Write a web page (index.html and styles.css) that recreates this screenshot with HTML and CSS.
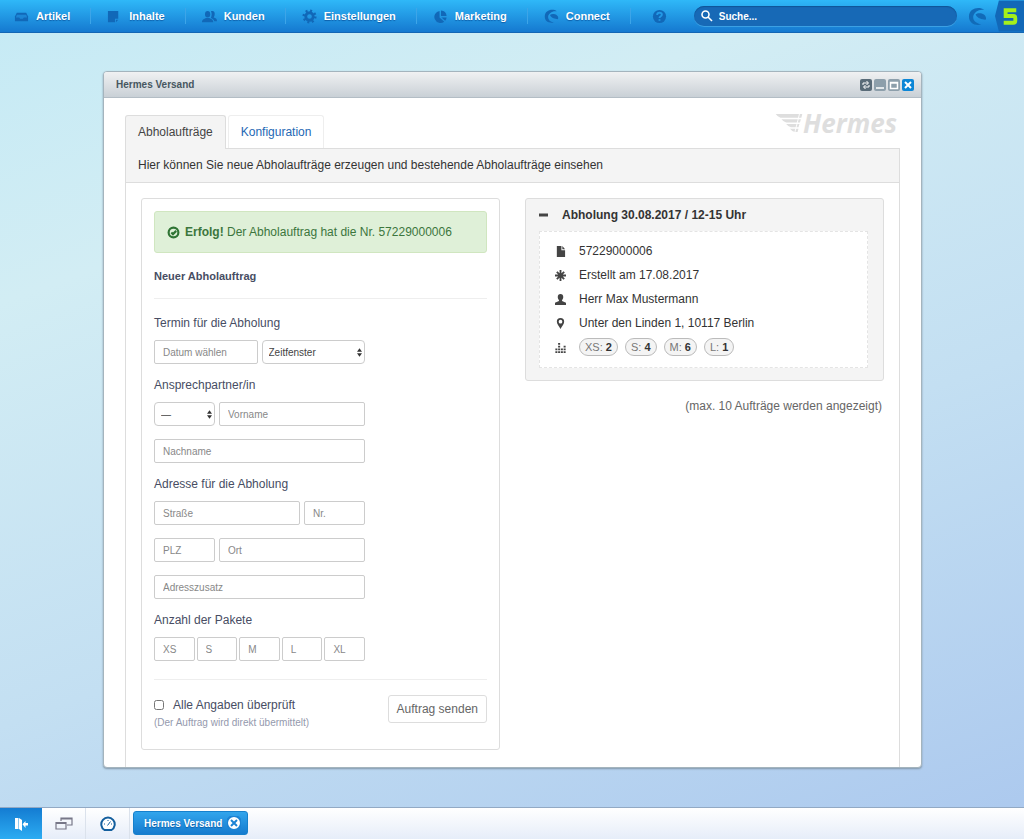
FILE: index.html
```html
<!DOCTYPE html>
<html lang="de">
<head>
<meta charset="utf-8">
<meta name="viewport" content="width=device-width, initial-scale=1">
<title>Hermes Versand</title>
<link rel="stylesheet" href="styles.css">
</head>
<body>
<header class="topbar">
  <nav class="menu">
    <a class="menu-item" href="#"><svg class="menu-icon" viewBox="0 0 16 16"><path d="M3 4h10l2 4v5H1V8z"/><path class="cut" d="M3 6h10l1 3h-3.500l-1 1.500h-3L5.500 9H2z"/></svg>Artikel</a>
    <a class="menu-item" href="#"><svg class="menu-icon" viewBox="0 0 16 16"><path d="M1 2h11v8.500H8.500V14H1zM9.500 11.500H12L9.500 14z"/></svg>Inhalte</a>
    <a class="menu-item" href="#"><svg class="menu-icon" viewBox="0 0 16 16"><ellipse cx="6" cy="5.500" rx="2.800" ry="3.500"/><path d="M0 14c0-3 2-3.500 4.500-4.500h3C10 10.500 12 11 12 14z"/><path d="M9.500 2.500c3-1 4.500 1 4 3.500-.2 1.500-.8 2-1 3 2 .8 3.500 1 3.500 4h-3c-.3-2-2-2.800-3.500-3.500 1-2 1.200-5 0-7z"/></svg>Kunden</a>
    <a class="menu-item" href="#"><svg class="menu-icon" viewBox="0 0 16 16"><circle class="line" cx="8" cy="8" r="4"/><circle class="teeth" cx="8" cy="8" r="6"/></svg>Einstellungen</a>
    <a class="menu-item" href="#"><svg class="menu-icon" viewBox="0 0 16 16"><path d="M7 2v7l5 4.500A6.500 6.500 0 1 1 7 2zM8.500 1.500A6.500 6.500 0 0 1 14.500 7.500h-6zM9 9h5.500a6 6 0 0 1-1.500 3.500z"/></svg>Marketing</a>
    <a class="menu-item" href="#"><svg class="menu-icon" viewBox="0 0 20 20"><path d="M17 3C12-1 1 1 1 10c0 7 6 9 12 8C8 17 5 14 5.500 10S11 2 17 3zM8 8c3-3 11-1 11 4 0 1-.5 1.500-1 1.500-3-.5-8-1-10-5.500z"/></svg>Connect</a>
    <a class="menu-item help" href="#" aria-label="Hilfe"><svg class="menu-icon" viewBox="0 0 16 16"><circle cx="8" cy="8" r="7"/><path class="question" d="M5.500 6.500C5.500 3 10.500 3.500 10.500 6c0 1.700-2.500 1.800-2.500 3.500M8 10.800v1.700"/></svg></a>
  </nav>
  <label class="search">
    <svg class="search-icon" viewBox="0 0 12 12"><circle cx="4.500" cy="4.500" r="3.500"/><path d="M7 7l4 4"/></svg>
    <input type="text" placeholder="Suche..." aria-label="Suche">
  </label>
  <svg class="swirl" viewBox="0 0 20 20"><path d="M17 3C12-1 1 1 1 10c0 7 6 10 13 8.500C8 17 5 14 5.500 10S11 2 17 3zM8 8c3-3 11-1 11 4 0 1-.5 1.500-1 1.500-3-.5-8-1-10-5.500z"/></svg>
  <svg class="version" viewBox="0 0 30 32"><path class="version-bg" d="M4 0h26v32H4L0 16z"/><path class="version-mark" d="M22 10H11v6h8q2 0 2 2v3q0 2-2 2H9"/></svg>
</header>

<main class="desktop">
  <section class="window">
    <header class="window-head">
      <h1 class="window-title">Hermes Versand</h1>
      <div class="window-tools">
        <button class="tool dark" aria-label="Neu laden"><svg viewBox="0 0 12 12"><path d="M3 6V4h5M6.500 2l2 2-2 2M9 6v2H4M5.500 6l-2 2 2 2"/></svg></button>
        <button class="tool" aria-label="Minimieren"><svg viewBox="0 0 12 12"><path d="M2 9h8"/></svg></button>
        <button class="tool" aria-label="Maximieren"><svg viewBox="0 0 12 12"><path d="M2.500 3.500h7v6h-7zM2 4h8"/></svg></button>
        <button class="tool close" aria-label="Schließen"><svg viewBox="0 0 12 12"><path d="M3 3l6 6M9 3L3 9"/></svg></button>
      </div>
    </header>
    <div class="window-body">
      <div class="tab-row">
        <div class="tabs">
          <a class="tab active" href="#">Abholaufträge</a>
          <a class="tab" href="#">Konfiguration</a>
        </div>
        <div class="brand"><svg class="wing" viewBox="0 0 28 20"><path d="M0 0h28l-1 4H5Q2 3 0 0zM6 5.500h20.500l-1 3.500H11Q8 8 6 5.500zM11 10.500h14l-1 3.500h-8q-3-1-5-3.500zM15 15.500h9l-1 3.500h-3q-3-1-5-3.500z"/><path class="wing-cut" d="M25 0l-5 20"/></svg><span>Hermes</span></div>
      </div>
      <div class="content">
        <p class="intro">Hier können Sie neue Abholaufträge erzeugen und bestehende Abholaufträge einsehen</p>
        <div class="columns">
          <form class="card">
            <div class="alert"><svg class="alert-icon" viewBox="0 0 12 12"><circle cx="6" cy="6" r="4.500"/><path d="M4 6l1.500 1.500L8.500 4.500"/></svg><span><strong>Erfolg!</strong> Der Abholauftrag hat die Nr. 57229000006</span></div>
            <h2 class="form-title">Neuer Abholauftrag</h2>
            <fieldset class="group">
              <legend>Termin für die Abholung</legend>
              <div class="row halves">
                <input class="field" type="text" placeholder="Datum wählen" aria-label="Datum wählen">
                <span class="picker"><select class="field" aria-label="Zeitfenster"><option>Zeitfenster</option></select><svg class="arrows" viewBox="0 0 6 10"><path d="M0 4l3-4 3 4zM0 6h6l-3 4z"/></svg></span>
              </div>
            </fieldset>
            <fieldset class="group">
              <legend>Ansprechpartner/in</legend>
              <div class="row short-long">
                <span class="picker"><select class="field" aria-label="Anrede"><option>—</option></select><svg class="arrows" viewBox="0 0 6 10"><path d="M0 4l3-4 3 4zM0 6h6l-3 4z"/></svg></span>
                <input class="field" type="text" placeholder="Vorname" aria-label="Vorname">
              </div>
              <div class="row"><input class="field" type="text" placeholder="Nachname" aria-label="Nachname"></div>
            </fieldset>
            <fieldset class="group">
              <legend>Adresse für die Abholung</legend>
              <div class="row long-short">
                <input class="field" type="text" placeholder="Straße" aria-label="Straße">
                <input class="field" type="text" placeholder="Nr." aria-label="Hausnummer">
              </div>
              <div class="row short-long">
                <input class="field" type="text" placeholder="PLZ" aria-label="PLZ">
                <input class="field" type="text" placeholder="Ort" aria-label="Ort">
              </div>
              <div class="row"><input class="field" type="text" placeholder="Adresszusatz" aria-label="Adresszusatz"></div>
            </fieldset>
            <fieldset class="group">
              <legend>Anzahl der Pakete</legend>
              <div class="row fifths">
                <input class="field" type="text" placeholder="XS" aria-label="XS">
                <input class="field" type="text" placeholder="S" aria-label="S">
                <input class="field" type="text" placeholder="M" aria-label="M">
                <input class="field" type="text" placeholder="L" aria-label="L">
                <input class="field" type="text" placeholder="XL" aria-label="XL">
              </div>
            </fieldset>
            <div class="submit-row">
              <div>
                <label class="check"><input type="checkbox">Alle Angaben überprüft</label>
                <p class="hint">(Der Auftrag wird direkt übermittelt)</p>
              </div>
              <button class="send" type="button">Auftrag senden</button>
            </div>
          </form>
          <div class="orders">
            <article class="order">
              <h2 class="order-title"><svg class="minus" viewBox="0 0 10 10"><path d="M0 3.500h9v3H0z"/></svg>Abholung 30.08.2017 / 12-15 Uhr</h2>
              <ul class="order-data">
                <li><svg viewBox="0 0 12 12"><path d="M2 0h5v4.500h4V12H2zM8 0l3 3.500H8z"/></svg>57229000006</li>
                <li><svg viewBox="0 0 12 12"><path class="star" d="M6 0v12M0 6h12M2 2l8 8M10 2l-8 8"/></svg>Erstellt am 17.08.2017</li>
                <li><svg viewBox="0 0 12 12"><path d="M6 0c2 0 3 1.200 3 3.200 0 1.500-.6 2.500-1.300 3.300v1.200L12 9.500V12H0V9.500l4.300-1.800V6.500C3.600 5.700 3 4.700 3 3.200 3 1.200 4 0 6 0z"/></svg>Herr Max Mustermann</li>
                <li><svg viewBox="0 0 12 12"><path fill-rule="evenodd" d="M6 0a4 4 0 0 1 4 4c0 2.500-2.500 5-4 8-1.500-3-4-5.500-4-8a4 4 0 0 1 4-4zm0 2a2 2 0 1 0 0 4 2 2 0 0 0 0-4z"/></svg>Unter den Linden 1, 10117 Berlin</li>
                <li><svg viewBox="0 0 12 12"><path class="bar" d="M1.500 12V6M4.500 12V0M7.500 12V6M10.500 12V3"/></svg><span class="badges"><span class="badge">XS: <b>2</b></span><span class="badge">S: <b>4</b></span><span class="badge">M: <b>6</b></span><span class="badge">L: <b>1</b></span></span></li>
              </ul>
            </article>
            <p class="limit">(max. 10 Aufträge werden angezeigt)</p>
          </div>
        </div>
      </div>
    </div>
  </section>
</main>

<footer class="taskbar">
  <button class="task exit" aria-label="Abmelden"><svg viewBox="0 0 14 14"><path d="M1 1h3.500v11H1zM5 1l3 2v11l-3-2zM14 6v2.500h-2.500V11L8.500 7.200l3-3.200v2z"/></svg></button>
  <button class="task" aria-label="Fenster"><svg class="windows" viewBox="0 0 18 14"><path d="M6 4V1h11v7h-5M6 2h11M1 5.500h10V12H1zM1 6.500h10"/></svg></button>
  <button class="task" aria-label="Übersicht"><svg class="gauge" viewBox="0 0 16 16"><path d="M4.500 14A6.700 6.700 0 1 1 11.500 14z"/><path class="needle" d="M7.500 9.500l3-4M4 8h1M11 8h1M8 4v1"/></svg></button>
  <button class="open-app">Hermes Versand<svg viewBox="0 0 14 14"><circle cx="7" cy="7" r="7"/><path d="M4 4l6 6M10 4l-6 6"/></svg></button>
</footer>
</body>
</html>
```

FILE: styles.css
```css
* { box-sizing: border-box; }
body {
  margin: 0;
  min-height: 100vh;
  display: flex;
  flex-direction: column;
  font: 12px/20px "Liberation Sans", Arial, sans-serif;
  color: #333;
  background: linear-gradient(160deg, #c5eaf5 0%, #d2edf4 25%, #c3dff2 60%, #abc8ee 100%);
}
h1, h2, p, ul { margin: 0; padding: 0; font-size: inherit; }
a { text-decoration: none; }
input, select, button { font-family: inherit; }

.topbar {
  display: flex;
  align-items: center;
  height: 33px;
  background: linear-gradient(#2fb8f8, #1579d0);
  border-bottom: 1px solid #1466b4;
}
.menu { display: flex; align-items: center; }
.menu-item {
  display: flex;
  align-items: center;
  height: 16px;
  padding: 0 20px 0 16px;
  border-right: 1px solid #3da5e8;
  color: #fff;
  font-size: 11px;
  font-weight: bold;
  text-shadow: 0 1px 1px #0d5ea8;
}
.menu-item:first-child { padding-left: 14px; }
.menu-icon { width: 15px; height: 15px; margin-right: 7px; fill: #1168b8; }
.menu-icon .cut { fill: #1c86d6; }
.menu-icon .line { fill: none; stroke: #1168b8; stroke-width: 3; }
.menu-icon .teeth { fill: none; stroke: #1168b8; stroke-width: 3; stroke-dasharray: 2 2.700; }
.menu-icon .question { fill: none; stroke: #239ae6; stroke-width: 2; }
.help { padding: 0 20px 0 21px; border: 0; }
.search {
  flex: 1;
  display: flex;
  align-items: center;
  height: 20px;
  padding: 0 7px;
  border-radius: 10px;
  background: #1769b6;
  box-shadow: inset 0 1px 1px #0f5597, 0 1px 0 #3ba0e4;
}
.search-icon { width: 12px; height: 12px; fill: none; stroke: #fff; stroke-width: 1.600; }
.search input {
  flex: 1;
  min-width: 0;
  margin-left: 6px;
  padding: 0;
  border: 0;
  outline: 0;
  background: none;
  color: #fff;
  font-size: 10px;
  font-weight: bold;
}
.search input::placeholder { color: #fff; opacity: 1; }
.swirl { width: 19px; height: 19px; margin: 0 8px 0 11px; fill: #116bb8; }
.version { width: 29px; height: 32px; }
.version-bg { fill: #1268b8; }
.version-mark { fill: none; stroke: #a4f01c; stroke-width: 4; }

.desktop { flex: 1; display: flex; padding: 38px 102px 39px 103px; }
.window {
  flex: 1;
  display: flex;
  flex-direction: column;
  border: 1px solid #a4b4bd;
  border-radius: 4px;
  background: #fff;
  box-shadow: 0 1px 2px #8296a8;
}
.window-head {
  display: flex;
  align-items: center;
  justify-content: space-between;
  height: 26px;
  padding: 0 7px 0 12px;
  border-bottom: 1px solid #b3bdc5;
  border-radius: 3px 3px 0 0;
  background: linear-gradient(#f0f1f2, #c9d0d6);
}
.window-title { font-size: 10px; font-weight: bold; color: #475760; }
.window-tools { display: flex; gap: 2px; }
.tool {
  width: 12px;
  height: 12px;
  padding: 0;
  border: 0;
  border-radius: 2px;
  background: #8d9fab;
}
.tool svg { display: block; width: 12px; height: 12px; fill: none; stroke: #fff; stroke-width: 1.500; }
.tool.dark { background: #596b78; }
.tool.dark svg { stroke-width: 1; }
.tool.close { background: #0c86d6; }
.tool.close svg { stroke-width: 2; }

.window-body { flex: 1; display: flex; flex-direction: column; padding: 17px 21px 0; }
.tab-row { display: flex; justify-content: space-between; }
.tabs { display: flex; gap: 2px; }
.tab {
  height: 33px;
  padding: 6px 12px;
  border: 1px solid #eee;
  border-bottom: 0;
  border-radius: 3px 3px 0 0;
  color: #2468b4;
}
.tab.active {
  position: relative;
  height: 34px;
  margin-bottom: -1px;
  border-color: #ddd;
  background: #f4f4f4;
  color: #444;
}
.brand {
  display: flex;
  align-items: center;
  height: 16px;
  padding-right: 3px;
  color: #dedede;
  font: italic bold 26px/20px "Open Sans", sans-serif;
}
.wing { width: 28px; height: 19px; fill: #dedede; }
.wing-cut { stroke: #fff; stroke-width: 1; }
.content { flex: 1; border: 1px solid #ddd; border-bottom: 0; }
.intro { padding: 6px 12px 7px; border-bottom: 1px solid #ddd; background: #f4f4f4; }
.columns {
  display: grid;
  grid-template-columns: 1fr 1fr;
  align-items: start;
  gap: 25px;
  padding: 15px 15px 16px;
}

.card { padding: 12px; border: 1px solid #ddd; border-radius: 3px; color: #474d63; }
.alert {
  display: flex;
  align-items: center;
  gap: 5px;
  height: 42px;
  padding: 0 12px;
  border: 1px solid #d0e6c0;
  border-radius: 3px;
  background: #dff0d8;
  color: #3c763d;
}
.alert-icon { width: 13px; height: 13px; fill: none; stroke: #2f7434; stroke-width: 2; }
.form-title {
  margin: 13px 0 14px;
  padding-bottom: 12px;
  border-bottom: 1px solid #eee;
  font-size: 11px;
  font-weight: bold;
}
.group { display: grid; gap: 13px; width: 211px; margin: 0 0 11px; padding: 0; border: 0; }
.group legend { padding: 0 0 7px; }
.row { display: grid; gap: 4px; }
.halves { grid-template-columns: 1fr 1fr; }
.short-long { grid-template-columns: 61px 1fr; }
.long-short { grid-template-columns: 1fr 61px; }
.fifths { grid-template-columns: repeat(5, 1fr); gap: 2px; }
.field {
  appearance: none;
  width: 100%;
  min-width: 0;
  height: 24px;
  padding: 0 8px;
  border: 1px solid #ccc;
  border-radius: 2px;
  background: #fff;
  color: #444;
  font-size: 10px;
}
.field::placeholder { color: #888; opacity: 1; }
select.field { padding: 0 6px; border-radius: 4px; }
.picker { position: relative; display: block; }
.arrows { position: absolute; right: 3px; top: 8px; width: 5px; height: 9px; fill: #333; }
.submit-row {
  display: flex;
  justify-content: space-between;
  align-items: flex-start;
  margin-top: 18px;
  padding: 15px 0 6px;
  border-top: 1px solid #eee;
}
.check { display: flex; align-items: center; gap: 9px; }
.check input { width: 10px; height: 10px; margin: 0; }
.hint { color: #9499ad; font-size: 10px; line-height: 16px; }
.send {
  height: 28px;
  padding: 0 8px;
  border: 1px solid #ddd;
  border-radius: 3px;
  background: #fff;
  color: #666;
  font-size: 12px;
}

.order { padding: 6px 15px 12px 13px; border: 1px solid #ddd; border-radius: 3px; background: #f4f4f4; }
.order-title { display: flex; align-items: center; gap: 13px; margin-bottom: 6px; }
.minus { width: 10px; height: 10px; fill: #444; }
.order-data { padding: 7px 15px 8px; border: 1px dashed #e4e4e4; background: #fff; list-style: none; }
.order-data li { display: flex; align-items: center; gap: 13px; height: 24px; }
.order-data svg { width: 11px; height: 11px; fill: #444; }
.order-data .star { fill: none; stroke: #444; stroke-width: 2; }
.order-data .bar { fill: none; stroke: #444; stroke-width: 2.200; stroke-dasharray: 2 1; }
.badges { display: flex; gap: 7px; }
.badge {
  padding: 0 5px;
  border: 1px solid #bbb;
  border-radius: 9px;
  background: #f4f4f4;
  color: #777;
  font-size: 11px;
  line-height: 16px;
}
.badge b { color: #333; }
.limit { padding: 15px 2px 0; color: #666; text-align: right; }

.taskbar {
  display: flex;
  height: 32px;
  border-top: 1px solid #92a9c4;
  background: linear-gradient(#fff, #e6edf9);
}
.task {
  display: flex;
  align-items: center;
  justify-content: center;
  width: 44px;
  padding: 0;
  border: 0;
  border-right: 1px solid #dbe2ec;
  background: none;
}
.task.exit { width: 42px; border: 0; background: linear-gradient(#147cd2, #2cacf2); }
.exit svg { width: 14px; height: 14px; fill: #fff; }
.windows { width: 18px; height: 14px; fill: none; stroke: #778; stroke-width: 1.200; }
.gauge { width: 16px; height: 16px; fill: #fff; stroke: #145f9e; stroke-width: 2; }
.gauge .needle { fill: none; stroke-width: 1; }
.open-app {
  display: flex;
  align-items: center;
  gap: 5px;
  height: 24px;
  margin: 3px;
  padding: 0 6px 0 10px;
  border: 1px solid #1680cc;
  border-radius: 3px;
  background: linear-gradient(#32a5ec, #157bcf);
  color: #fff;
  font-size: 10px;
  font-weight: bold;
  text-shadow: 0 1px 1px #0d5ea8;
}
.open-app svg { width: 14px; height: 14px; fill: #fff; stroke: #1b83d4; stroke-width: 2; }
```
